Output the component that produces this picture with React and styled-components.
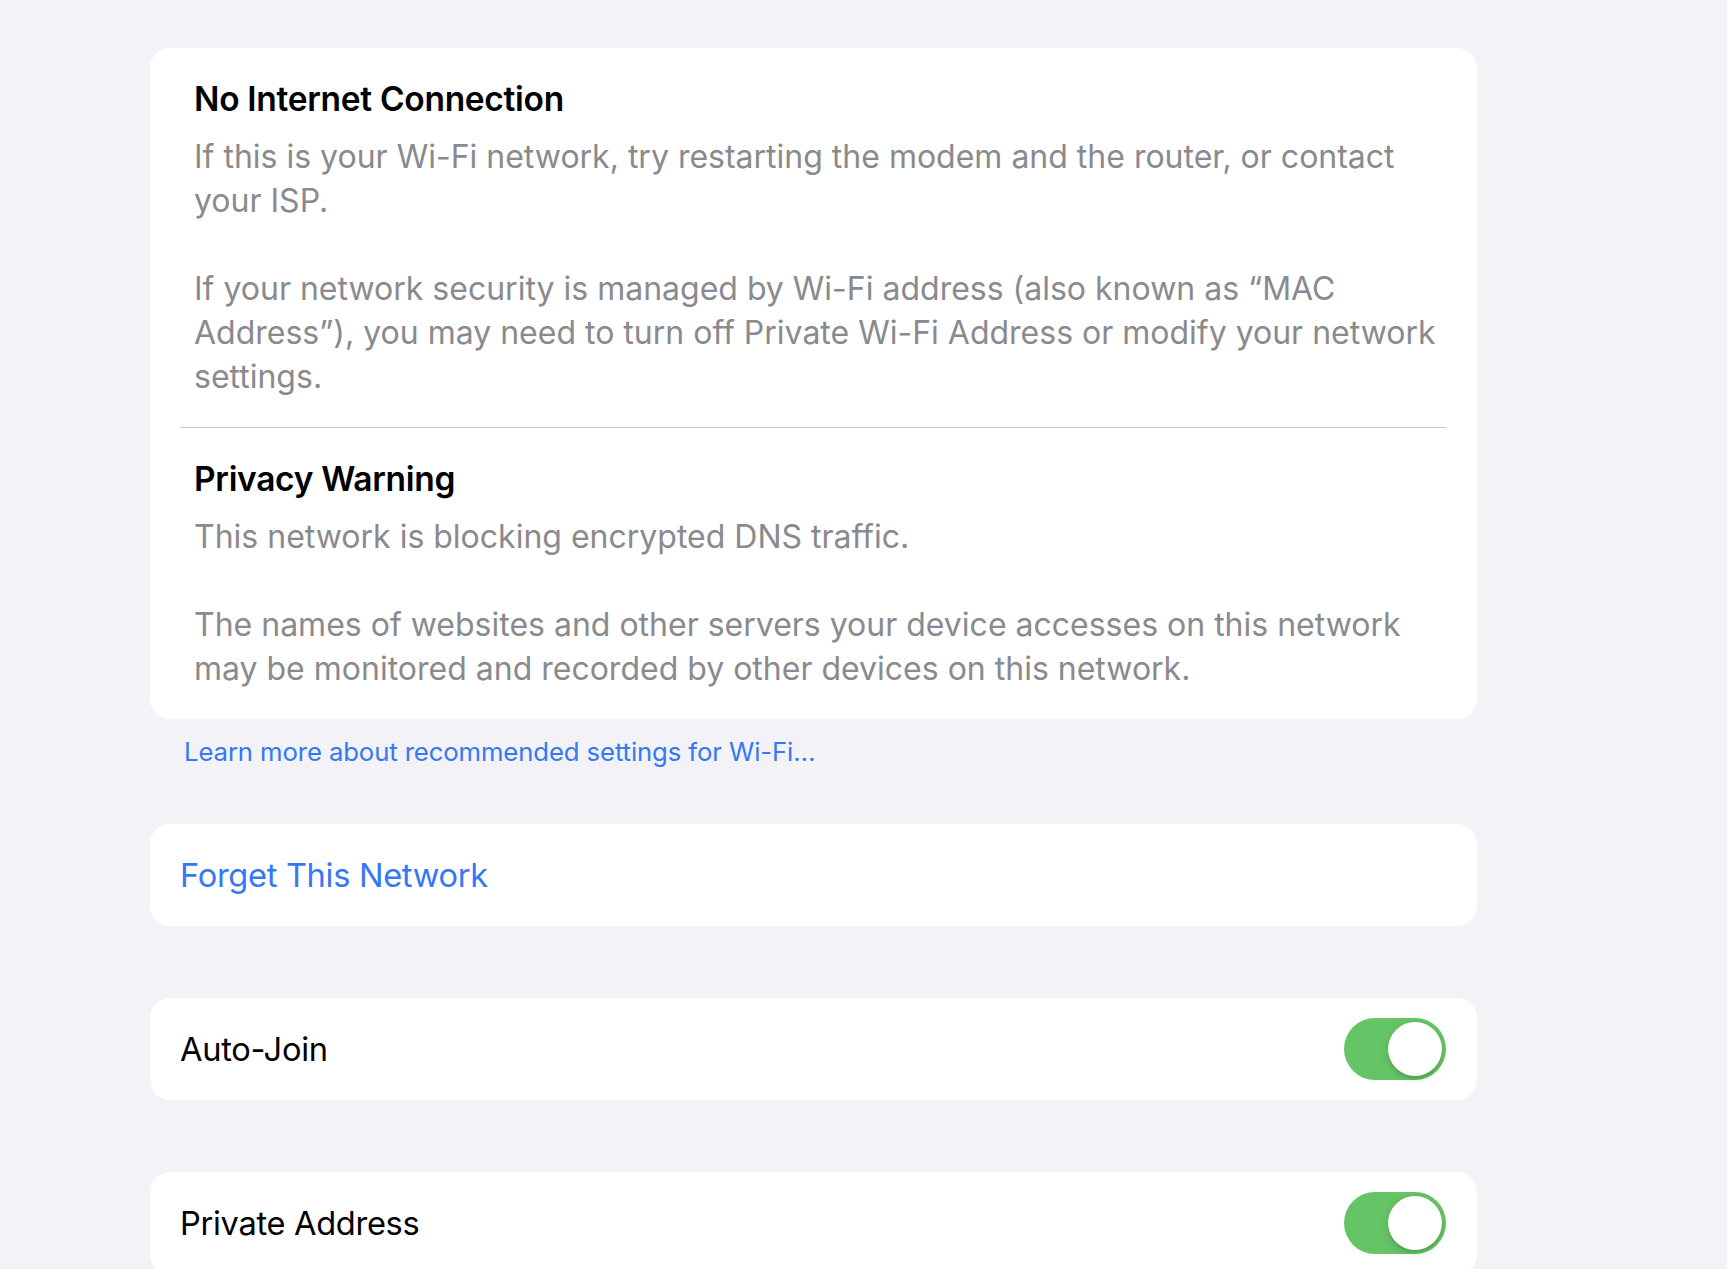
import React from "react";
import styled, { createGlobalStyle } from "styled-components";

const Global = createGlobalStyle`
  html, body {
    margin: 0;
    padding: 0;
    background: #f2f2f7;
    overflow: hidden;
  }
  body {
    font-family: Inter, "Noto Sans", "Liberation Sans", sans-serif;
    -webkit-font-smoothing: antialiased;
  }
`;

const Page = styled.div`
  min-height: 1269px;
  background: #f2f2f7;
  padding: 48px 0 0 150px;
  box-sizing: border-box;
`;

const Column = styled.div`
  width: 1327px;
  display: flex;
  flex-direction: column;
`;

const Card = styled.div`
  background: #ffffff;
  border-radius: 20px;
  margin-top: ${(p) => p.$gap || 0}px;
  overflow: hidden;
`;

const Section = styled.div`
  padding: 29px 38px 28px 44px;
`;

const Divider = styled.div`
  height: 1px;
  background: #c8c8cc;
  margin: 0 31px 0 30px;
`;

const Heading = styled.div`
  font-size: 33.5px;
  font-weight: 600;
  line-height: 44px;
  color: #000;
  letter-spacing: -0.3px;
`;

const Body = styled.p`
  margin: ${(p) => (p.$first ? 14 : 44)}px 0 0 0;
  font-size: 32px;
  line-height: 44px;
  color: #8a8a8e;
  letter-spacing: 0;
`;

const FooterLink = styled.a`
  display: block;
  margin: 16px 0 0 34px;
  font-size: 25.7px;
  line-height: 34px;
  color: #3478f6;
  text-decoration: none;
  letter-spacing: -0.1px;
`;

const Row = styled.div`
  height: 102px;
  display: flex;
  align-items: center;
  justify-content: space-between;
  padding: 0 31px 0 30px;
`;

const RowLabel = styled.span`
  font-size: 32.6px;
  color: ${(p) => (p.$action ? "#3478f6" : "#000")};
  letter-spacing: -0.3px;
`;

const Toggle = styled.div`
  width: 102px;
  height: 62px;
  border-radius: 31px;
  background: #65c466;
  display: flex;
  align-items: center;
  justify-content: flex-end;
  padding: 4px;
  box-sizing: border-box;
`;

const Knob = styled.div`
  width: 54px;
  height: 54px;
  border-radius: 50%;
  background: #fff;
  box-shadow: 0 3px 8px rgba(0, 0, 0, 0.15), 0 3px 1px rgba(0, 0, 0, 0.06);
`;

export default function App() {
  return (
    <>
      <Global />
      <Page>
        <Column>
          <Card>
            <Section>
              <Heading>No Internet Connection</Heading>
              <Body $first>
                If this is your Wi-Fi network, try restarting the modem and the router, or contact
                your ISP.
              </Body>
              <Body>
                If your network security is managed by Wi-Fi address (also known as “MAC
                Address”), you may need to turn off Private Wi-Fi Address or modify your network
                settings.
              </Body>
            </Section>
            <Divider />
            <Section>
              <Heading>Privacy Warning</Heading>
              <Body $first>This network is blocking encrypted DNS traffic.</Body>
              <Body>
                The names of websites and other servers your device accesses on this network
                may be monitored and recorded by other devices on this network.
              </Body>
            </Section>
          </Card>
          <FooterLink href="#">Learn more about recommended settings for Wi-Fi…</FooterLink>
          <Card $gap={55}>
            <Row>
              <RowLabel $action>Forget This Network</RowLabel>
            </Row>
          </Card>
          <Card $gap={72}>
            <Row>
              <RowLabel>Auto-Join</RowLabel>
              <Toggle>
                <Knob />
              </Toggle>
            </Row>
          </Card>
          <Card $gap={72}>
            <Row>
              <RowLabel>Private Address</RowLabel>
              <Toggle>
                <Knob />
              </Toggle>
            </Row>
          </Card>
        </Column>
      </Page>
    </>
  );
}
